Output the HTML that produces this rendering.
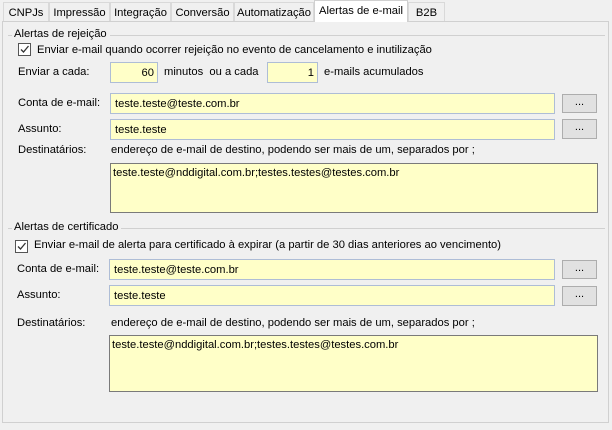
<!DOCTYPE html><html><head><style>
body{margin:0;width:612px;height:430px;background:#f0f0f0;font-family:"Liberation Sans",sans-serif;font-size:11.2px;color:#000;position:relative;overflow:hidden}
div,span{position:absolute;box-sizing:border-box}
.tab{top:2px;height:19px;border:1px solid #d9d9d9;border-bottom:none;background:#f0f0f0;padding:4px 0 0 0;text-align:center}
.t{white-space:nowrap}
.in{background:#ffffc8;border:1px solid #aebdd6;padding:4px 0 0 4px;white-space:nowrap}
.btn{background:#e1e1e1;border:1px solid #adadad;text-align:center;font-size:11px;line-height:14px}
.ta{background:#ffffc8;border:1px solid #7a7a7a;padding:3px 0 0 2px;white-space:nowrap}
.cb{width:13px;height:13px;border:1px solid #555;background:#fff}
.line{height:1px;background:#d0d0d0}
</style></head><body>
<div style="left:2px;top:21px;width:607px;height:402px;border:1px solid #d0d0d0;background:#f0f0f0"></div>
<div class="tab" style="left:3px;width:46px">CNPJs</div>
<div class="tab" style="left:49px;width:61px">Impressão</div>
<div class="tab" style="left:110px;width:61px">Integração</div>
<div class="tab" style="left:171px;width:63px">Conversão</div>
<div class="tab" style="left:234px;width:80px">Automatização</div>
<div class="tab" style="left:314px;top:0;height:22px;width:94px;background:#fff;border-color:#d0d0d0;padding-top:4px">Alertas de e-mail</div>
<div class="tab" style="left:408px;width:37px">B2B</div>

<div class="line" style="left:8px;top:35px;width:597px"></div>
<span class="t" style="left:12px;top:28px;background:#f0f0f0;padding:0 3px 0 2px">Alertas de rejeição</span>
<div class="cb" style="left:18px;top:43px"><svg width="11" height="11" style="position:absolute;left:0;top:0"><path d="M2 5.5 L4.5 8 L9.5 2" stroke="#333" fill="none" stroke-width="1.3"/></svg></div>
<span class="t" style="left:37px;top:44px">Enviar e-mail quando ocorrer rejeição no evento de cancelamento e inutilização</span>
<span class="t" style="left:18px;top:66px">Enviar a cada:</span>
<div class="in" style="left:110px;top:62px;width:48px;height:21px;text-align:right;padding-right:3px">60</div>
<span class="t" style="left:164px;top:66px">minutos &nbsp;ou a cada</span>
<div class="in" style="left:267px;top:62px;width:51px;height:21px;text-align:right;padding-right:3px">1</div>
<span class="t" style="left:324px;top:66px">e-mails acumulados</span>
<span class="t" style="left:18px;top:97px">Conta de e-mail:</span>
<div class="in" style="left:110px;top:93px;width:445px;height:21px">teste.teste@teste.com.br</div>
<div class="btn" style="left:562px;top:94px;width:35px;height:19px">...</div>
<span class="t" style="left:18px;top:123px">Assunto:</span>
<div class="in" style="left:110px;top:119px;width:445px;height:21px">teste.teste</div>
<div class="btn" style="left:562px;top:119px;width:35px;height:20px">...</div>
<span class="t" style="left:18px;top:144px">Destinatários:</span>
<span class="t" style="left:111px;top:144px">endereço de e-mail de destino, podendo ser mais de um, separados por ;</span>
<div class="ta" style="left:110px;top:163px;width:488px;height:50px">teste.teste@nddigital.com.br;testes.testes@testes.com.br</div>

<div class="line" style="left:8px;top:228px;width:597px"></div>
<span class="t" style="left:12px;top:221px;background:#f0f0f0;padding:0 3px 0 2px">Alertas de certificado</span>
<div class="cb" style="left:15px;top:240px"><svg width="11" height="11" style="position:absolute;left:0;top:0"><path d="M2 5.5 L4.5 8 L9.5 2" stroke="#333" fill="none" stroke-width="1.3"/></svg></div>
<span class="t" style="left:34px;top:239px">Enviar e-mail de alerta para certificado à expirar (a partir de 30 dias anteriores ao vencimento)</span>
<span class="t" style="left:17px;top:263px">Conta de e-mail:</span>
<div class="in" style="left:109px;top:259px;width:446px;height:21px">teste.teste@teste.com.br</div>
<div class="btn" style="left:562px;top:260px;width:35px;height:19px">...</div>
<span class="t" style="left:17px;top:289px">Assunto:</span>
<div class="in" style="left:109px;top:285px;width:446px;height:21px">teste.teste</div>
<div class="btn" style="left:562px;top:286px;width:35px;height:20px">...</div>
<span class="t" style="left:17px;top:317px">Destinatários:</span>
<span class="t" style="left:111px;top:317px">endereço de e-mail de destino, podendo ser mais de um, separados por ;</span>
<div class="ta" style="left:109px;top:335px;width:489px;height:57px">teste.teste@nddigital.com.br;testes.testes@testes.com.br</div>
</body></html>
